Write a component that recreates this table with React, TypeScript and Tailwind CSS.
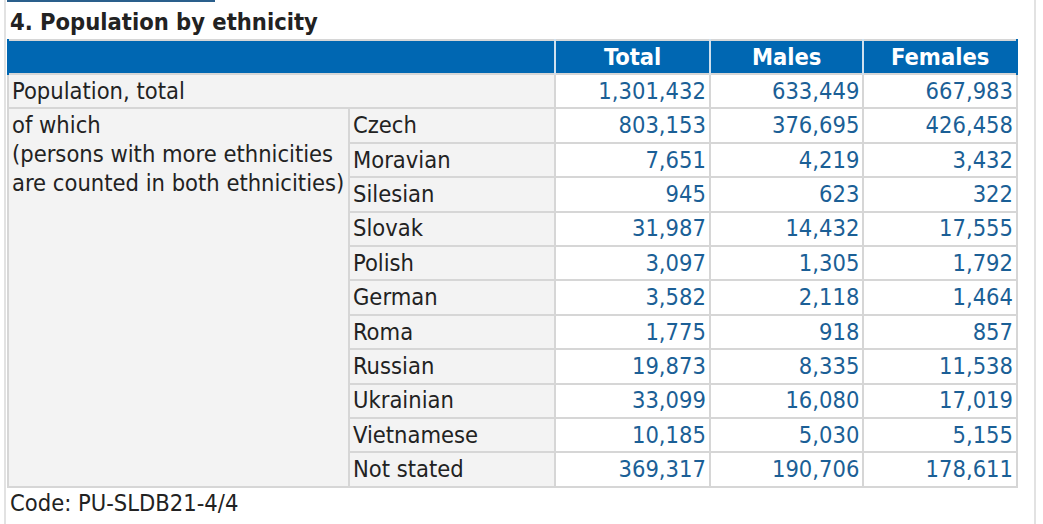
import React from "react";

const rows: [string, string, string, string][] = [
  ["Czech", "803,153", "376,695", "426,458"],
  ["Moravian", "7,651", "4,219", "3,432"],
  ["Silesian", "945", "623", "322"],
  ["Slovak", "31,987", "14,432", "17,555"],
  ["Polish", "3,097", "1,305", "1,792"],
  ["German", "3,582", "2,118", "1,464"],
  ["Roma", "1,775", "918", "857"],
  ["Russian", "19,873", "8,335", "11,538"],
  ["Ukrainian", "33,099", "16,080", "17,019"],
  ["Vietnamese", "10,185", "5,030", "5,155"],
  ["Not stated", "369,317", "190,706", "178,611"],
];

const num = "h-[34.4px] border-2 border-[#d6d6d6] bg-white px-[3px] py-0 text-right align-middle text-[#1b5f96]";
const lab = "h-[34.4px] border-2 border-[#d6d6d6] bg-[#f3f3f3] px-[3px] py-0 text-left align-middle text-[#222]";
const head = "h-[34px] border-x-2 border-x-[#cfe0ee] bg-[#0067b2] px-[4px] py-0 text-center align-middle font-bold text-white";

export default function App() {
  return (
    <div className="h-[524px] w-[1043px] overflow-hidden bg-white font-['DejaVu_Sans_Condensed','DejaVu_Sans',sans-serif] text-[23.5px] leading-[28.7px] text-[#222]">
      <div className="ml-[4px] mr-[7px] h-full border-x-2 border-x-[#e2e2e2] pl-[1px]">
        <div className="h-[2px] w-[208px] bg-[#2a5f8c]" />
        <h2 className="mt-[6px] pl-[3px] text-[23.5px] font-bold leading-[28px] text-[#222]">
          4. Population by ethnicity
        </h2>
        <table className="mt-[3px] w-[1011px] border-collapse border-2 border-[#d6d6d6]">
          <colgroup>
            <col className="w-[341px]" />
            <col className="w-[207px]" />
            <col className="w-[155px]" />
            <col className="w-[154px]" />
            <col className="w-[154px]" />
          </colgroup>
          <thead>
            <tr>
              <th colSpan={2} className={head + " border-l-[#0067b2]"} />
              <th className={head}>Total</th>
              <th className={head}>Males</th>
              <th className={head + " border-r-[#0067b2]"}>Females</th>
            </tr>
          </thead>
          <tbody>
            <tr>
              <td colSpan={2} className={lab}>Population, total</td>
              <td className={num}>1,301,432</td>
              <td className={num}>633,449</td>
              <td className={num}>667,983</td>
            </tr>
            {rows.map((r, i) => (
              <tr key={r[0]}>
                {i === 0 ? (
                  <td
                    rowSpan={rows.length}
                    className="border-2 border-[#d6d6d6] bg-[#f3f3f3] px-[3px] pt-[2px] align-top whitespace-nowrap text-[#222]"
                  >
                    of which
                    <br />
                    (persons with more ethnicities
                    <br />
                    are counted in both ethnicities)
                  </td>
                ) : null}
                <td className={lab}>{r[0]}</td>
                <td className={num}>{r[1]}</td>
                <td className={num}>{r[2]}</td>
                <td className={num}>{r[3]}</td>
              </tr>
            ))}
          </tbody>
        </table>
        <div className="mt-[1px] pl-[3px] leading-[28px]">Code: PU-SLDB21-4/4</div>
      </div>
    </div>
  );
}
